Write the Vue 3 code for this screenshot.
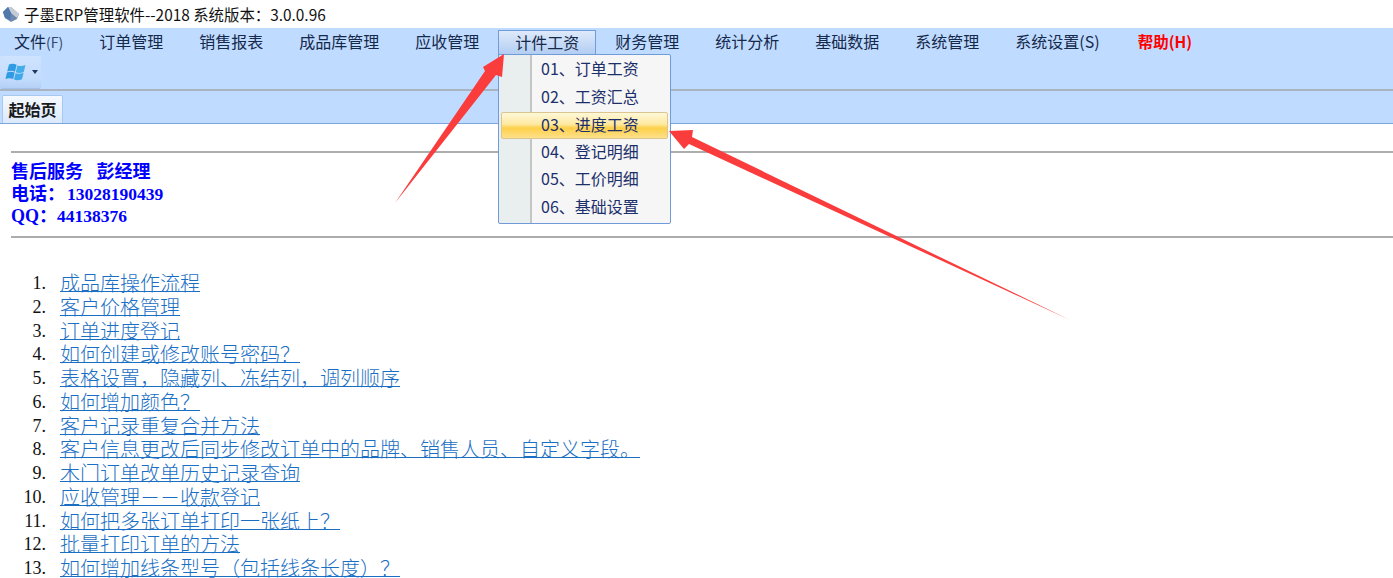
<script setup>
const menus = ['订单管理','销售报表','成品库管理','应收管理','计件工资','财务管理','统计分析','基础数据','系统管理','系统设置(S)']
const dropdown = ['01、订单工资','02、工资汇总','03、进度工资','04、登记明细','05、工价明细','06、基础设置']
const links = ['成品库操作流程','客户价格管理','订单进度登记','如何创建或修改账号密码？','表格设置，隐藏列、冻结列，调列顺序','如何增加颜色？','客户记录重复合并方法','客户信息更改后同步修改订单中的品牌、销售人员、自定义字段。','木门订单改单历史记录查询','应收管理－－收款登记','如何把多张订单打印一张纸上？','批量打印订单的方法','如何增加线条型号（包括线条长度）？']
</script>

<template>
  <div class="app">
    <header class="title">
      <svg class="title-icon" width="18" height="18" viewBox="0 0 18 18">
        <path d="M1 7 L6 2 L9 2 L17 9 L15 14 L9 17 L3 13 Z" fill="#6f88ad"/>
        <path d="M6 2 L9 2 L17 9 L15 13 L9 8 Z" fill="#c5ccd6"/>
        <path d="M1 7 L6 2 L9 8 L8 15 L3 13 Z" fill="#4f78ad"/>
      </svg>
      <span>子墨ERP管理软件--2018 系统版本：3.0.0.96</span>
    </header>
    <nav class="menubar">
      <span class="menu-item first">文件<small>(F)</small></span>
      <span v-for="m in menus" :key="m" class="menu-item" :class="{ active: m === '计件工资' }">{{ m }}</span>
      <span class="menu-item help">帮助(H)</span>
    </nav>
    <div class="toolbar">
      <div class="tool-btn">
        <svg width="21" height="18" viewBox="0 0 21 18">
          <path d="M4 1.5 Q8 0 11.6 1.8 L10 8.8 Q6 7 2.2 8.6 Z" fill="#2f9be4"/>
          <path d="M12.4 2.4 Q16 4 20.4 2 L18.8 9 Q14.5 10.8 10.8 9.3 Z" fill="#45ade9"/>
          <path d="M2 9.4 Q6 8 9.7 9.6 L8.2 16 Q4.5 14.4 0.4 16 Z" fill="#2f9be4"/>
          <path d="M10.6 10.2 Q14.5 11.6 18.6 9.8 L17 16.2 Q12.8 18 9 16.6 Z" fill="#3fa8e8"/>
        </svg>
        <i class="caret"></i>
      </div>
    </div>
    <div class="tabstrip"><div class="tab">起始页</div></div>
    <main class="content">
      <hr class="rule" />
      <div class="contact">
        <div>售后服务&nbsp;&nbsp;&nbsp;彭经理</div>
        <div>电话：<span class="digits tel">13028190439</span></div>
        <div>QQ：<span class="digits">44138376</span></div>
      </div>
      <hr class="rule" />
      <ol class="links">
        <li v-for="(l, i) in links" :key="l"><span class="num">{{ i + 1 }}.</span><a>{{ l }}</a></li>
      </ol>
    </main>

    <div class="dropdown">
      <div v-for="d in dropdown" :key="d" class="drop-item" :class="{ hot: d.startsWith('03') }"><span class="drop-label">{{ d }}</span></div>
    </div>

    <svg class="arrows" width="1393" height="578" viewBox="0 0 1393 578">
      <path d="M395 203 L485 71 L483 67 L504 54 L502 77 L496 75 Z" fill="#fb3c3c"/>
      <path d="M1070 320 L692 137 L693 130 L669 131 L684 149 L689 144 Z" fill="#fb3c3c"/>
    </svg>
  </div>
</template>

<style>
html, body { margin: 0; background: #fff; overflow: hidden; }
</style>

<style scoped>
.app {
  position: relative;
  width: 1393px;
  height: 578px;
  overflow: hidden;
  font-family: "Noto Sans CJK SC", "Noto Sans", sans-serif;
}
.title {
  height: 28px;
  display: flex;
  align-items: center;
  gap: 4px;
  padding-left: 2px;
  font-size: 15.4px;
  color: #111;
  background: #fff;
  box-sizing: border-box;
}
.title-icon { flex: none; }
.menubar {
  height: 28px;
  display: flex;
  align-items: center;
  background: #bfdbff;
}
.menu-item {
  height: 26px;
  line-height: 25px;
  padding: 0 18px;
  font-size: 16px;
  color: #15294b;
  box-sizing: border-box;
  white-space: nowrap;
}
.menu-item small { font-size: 14px; color: #34486a; }
.menu-item.first { padding-left: 14px; }
.menu-item.active {
  margin-top: 1px;
  width: 98px;
  margin-inline: 1px;
  border: 1px solid #6f9bd8;
  border-bottom: none;
  line-height: 23px;
  padding-inline: 16px;
  background: linear-gradient(#dfeafa, #aecbf2);
}
.menu-item.help {
  margin-left: 2px;
  font-size: 15.5px;
  font-weight: 700;
  color: #ff0000;
}
.toolbar {
  height: 35px;
  background: #bfdbff;
  border-bottom: 2px solid #a9b3c1;
  box-sizing: border-box;
}
.tool-btn {
  width: 41px;
  height: 33px;
  display: flex;
  align-items: center;
  gap: 6px;
  padding: 0 0 0 5px;
  box-sizing: border-box;
  background: linear-gradient(#cfe3fd, #c3dcfd 70%, #b4d0f5);
  border-radius: 2px;
  border-bottom: 1px solid #a5c3ea;
}
.caret {
  width: 0;
  height: 0;
  border-left: 3px solid transparent;
  border-right: 3px solid transparent;
  border-top: 4px solid #1f3560;
}
.tabstrip {
  height: 33px;
  background: #bfdbff;
  border-bottom: 1px solid #7ba7de;
  box-sizing: border-box;
  padding: 4px 0 0 2px;
  display: flex;
  align-items: flex-end;
}
.tab {
  width: 61px;
  height: 28px;
  line-height: 26px;
  box-sizing: border-box;
  text-align: center;
  font-size: 16px;
  font-weight: 700;
  color: #1a1a1a;
  background: linear-gradient(#f6faff, #dbe9fd);
  border: 1px solid #a8c8f0;
  border-bottom: none;
  border-radius: 2px 2px 0 0;
}
.content {
  background: #fff;
  padding: 28px 0 0 11px;
  font-family: "Liberation Serif", "Noto Sans CJK SC", serif;
}
.rule {
  margin: -1px 0 0;
  height: 2px;
  border: none;
  background: #adadad;
}
.contact {
  padding: 8px 0 0;
  font-size: 18px;
  line-height: 22px;
  height: 84px;
  box-sizing: border-box;
  font-weight: 700;
  color: #0000ff;
}
.digits { font-size: 17.5px; }
.digits.tel { padding-left: 2px; }
.links {
  list-style: none;
  margin: 0;
  padding: 33px 0 0 0;
}
.links li {
  display: flex;
  height: 23.75px;
  line-height: 24px;
  margin-left: -11px;
  font-size: 18px;
  color: #111;
}
.num {
  width: 46px;
  margin-right: 14px;
  text-align: right;
  flex: none;
}
.links a {
  display: block;
  height: 23.75px;
  font-size: 20px;
  color: #1a6fc4;
  text-decoration: underline;
  text-decoration-thickness: 1px;
  text-underline-offset: 0px;
  font-family: "Noto Sans CJK SC", sans-serif;
  font-weight: 300;
  white-space: nowrap;
}
.dropdown {
  position: absolute;
  left: 498px;
  top: 54px;
  width: 173px;
  height: 170px;
  box-sizing: border-box;
  border: 1px solid #6f9bd8;
  border-radius: 2px;
  padding: 1px 1px;
  background: linear-gradient(90deg, #e9eeef 0, #e9eeef 31px, #c5c5c5 31px, #c5c5c5 33px, #f6f6f6 33px);
}
.drop-item {
  height: 27.5px;
  line-height: 24px;
  font-size: 16px;
  color: #1d2f6b;
  box-sizing: border-box;
  white-space: nowrap;
}
.drop-label { padding-left: 41px; }
.drop-item.hot {
  margin: 1px 1px 0;
  height: 26.5px;
  border: 1px solid #dcc690;
  border-radius: 2px;
  line-height: 23px;
  background: linear-gradient(#fff8d8, #fee9a0 45%, #fdd049 60%, #ffe08a);
}
.drop-item.hot .drop-label { padding-left: 39px; }
.arrows {
  position: absolute;
  left: 0;
  top: 0;
  pointer-events: none;
}
</style>
